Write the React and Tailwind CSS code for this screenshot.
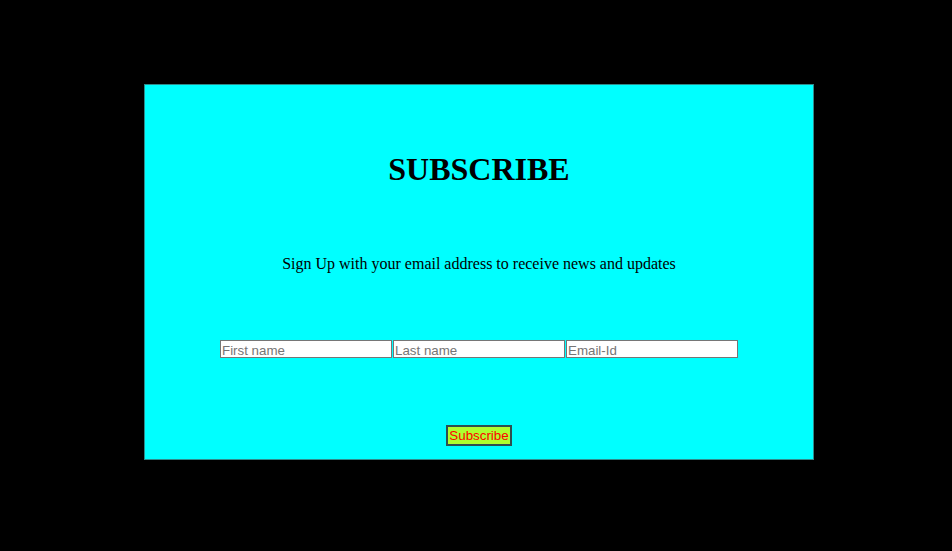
export default function App() {
  return (
    <div className="min-h-[551px] w-full bg-black pt-[84px]">
      <div className="ml-[144px] w-[670px] h-[376px] bg-[#00ffff] border border-[#2e8b8b] flex flex-col items-center font-['Liberation_Serif',serif] text-black">
        <h1 className="mt-[66px] text-[32px] leading-[37px] font-bold">SUBSCRIBE</h1>
        <p className="mt-[67px] text-[16px] leading-[18px]">
          Sign Up with your email address to receive news and updates
        </p>
        <div className="mt-[67px] flex gap-[1px] font-['Liberation_Sans',sans-serif] text-[13.33px]">
          <input
            type="text"
            placeholder="First name"
            className="w-[172px] h-[18px] border border-[#767676] bg-white px-[1px] pt-[2px] leading-[14px] outline-none placeholder:text-[#757575]"
          />
          <input
            type="text"
            placeholder="Last name"
            className="w-[172px] h-[18px] border border-[#767676] bg-white px-[1px] pt-[2px] leading-[14px] outline-none placeholder:text-[#757575]"
          />
          <input
            type="email"
            placeholder="Email-Id"
            className="w-[172px] h-[18px] border border-[#767676] bg-white px-[1px] pt-[2px] leading-[14px] outline-none placeholder:text-[#757575]"
          />
        </div>
        <button className="mt-[67px] w-[66px] h-[21px] border-2 border-[#2f4f4f] bg-[#adff2f] text-[#ff0000] text-[13.33px] leading-none font-['Liberation_Sans',sans-serif]">
          Subscribe
        </button>
      </div>
    </div>
  )
}
